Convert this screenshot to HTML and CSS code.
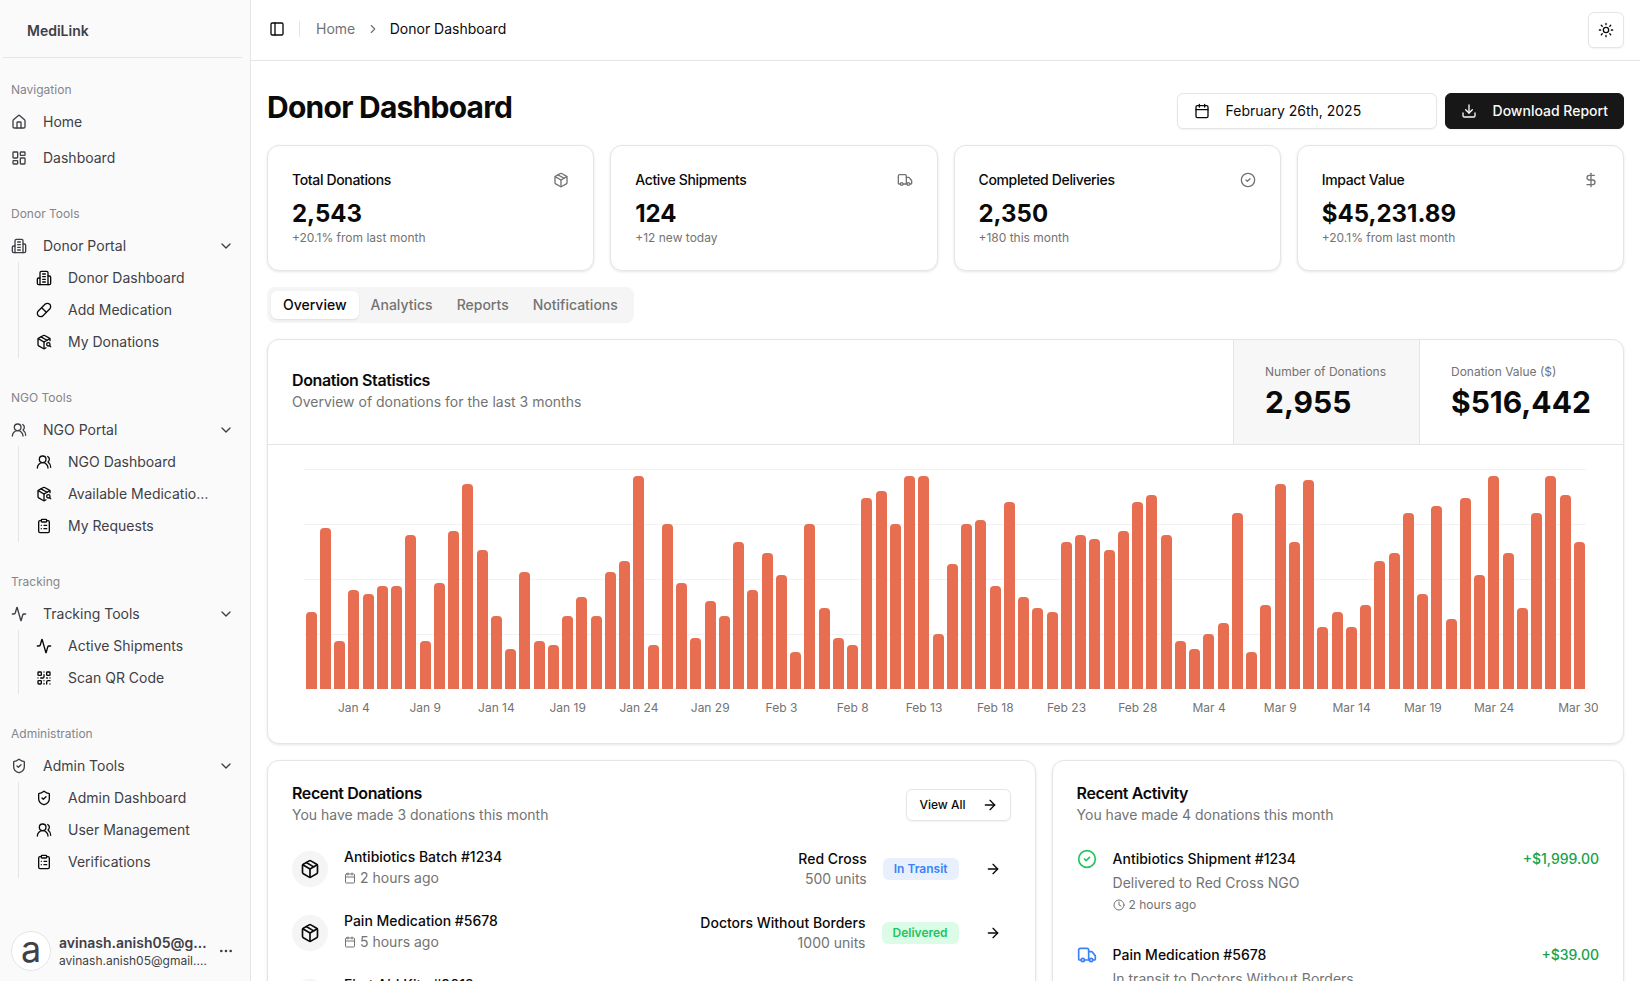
FILE: index.html
```html
<!DOCTYPE html>
<html lang="en">
<head>
    <meta charset="UTF-8">
    <title>Donor Dashboard - MediLink</title>
    <link rel="stylesheet" href="styles.css">
</head>
<body>

<!-- Icon sprite -->
<svg class="sprite" xmlns="http://www.w3.org/2000/svg">
    <symbol id="i-house" viewBox="0 0 24 24"><path d="M15 21v-8a1 1 0 0 0-1-1h-4a1 1 0 0 0-1 1v8"/><path d="M3 10a2 2 0 0 1 .709-1.528l7-5.999a2 2 0 0 1 2.582 0l7 5.999A2 2 0 0 1 21 10v9a2 2 0 0 1-2 2H5a2 2 0 0 1-2-2z"/></symbol>
    <symbol id="i-layout" viewBox="0 0 24 24"><rect width="7" height="9" x="3" y="3" rx="1"/><rect width="7" height="5" x="14" y="3" rx="1"/><rect width="7" height="9" x="14" y="12" rx="1"/><rect width="7" height="5" x="3" y="16" rx="1"/></symbol>
    <symbol id="i-building" viewBox="0 0 24 24"><path d="M6 22V4a2 2 0 0 1 2-2h8a2 2 0 0 1 2 2v18Z"/><path d="M6 12H4a2 2 0 0 0-2 2v6a2 2 0 0 0 2 2h2"/><path d="M18 9h2a2 2 0 0 1 2 2v9a2 2 0 0 1-2 2h-2"/><path d="M10 6h4M10 10h4M10 14h4M10 18h4"/></symbol>
    <symbol id="i-pill" viewBox="0 0 24 24"><path d="m10.5 20.5 10-10a4.95 4.95 0 1 0-7-7l-10 10a4.95 4.95 0 1 0 7 7Z"/><path d="m8.5 8.5 7 7"/></symbol>
    <symbol id="i-package-search" viewBox="0 0 24 24"><path d="M21 10V8a2 2 0 0 0-1-1.73l-7-4a2 2 0 0 0-2 0l-7 4A2 2 0 0 0 3 8v8a2 2 0 0 0 1 1.73l7 4a2 2 0 0 0 2 0l2-1.14"/><path d="m7.5 4.27 9 5.15"/><polyline points="3.29 7 12 12 20.71 7"/><line x1="12" x2="12" y1="22" y2="12"/><circle cx="18.5" cy="15.5" r="2.5"/><path d="M20.27 17.27 22 19"/></symbol>
    <symbol id="i-users" viewBox="0 0 24 24"><path d="M18 21a8 8 0 0 0-16 0"/><circle cx="10" cy="8" r="5"/><path d="M22 20c0-3.37-2-6.5-4-8a5 5 0 0 0-.45-8.3"/></symbol>
    <symbol id="i-clipboard" viewBox="0 0 24 24"><rect width="8" height="4" x="8" y="2" rx="1"/><path d="M16 4h2a2 2 0 0 1 2 2v14a2 2 0 0 1-2 2H6a2 2 0 0 1-2-2V6a2 2 0 0 1 2-2h2"/><path d="M12 11h4M12 16h4M8 11h.01M8 16h.01"/></symbol>
    <symbol id="i-activity" viewBox="0 0 24 24"><path d="M22 12h-2.48a2 2 0 0 0-1.93 1.46l-2.35 8.36a.25.25 0 0 1-.48 0L9.24 2.18a.25.25 0 0 0-.48 0l-2.35 8.36A2 2 0 0 1 4.49 12H2"/></symbol>
    <symbol id="i-qr" viewBox="0 0 24 24"><rect width="5" height="5" x="3" y="3" rx="1"/><rect width="5" height="5" x="16" y="3" rx="1"/><rect width="5" height="5" x="3" y="16" rx="1"/><path d="M21 16h-3a2 2 0 0 0-2 2v3"/><path d="M21 21v.01"/><path d="M12 7v3a2 2 0 0 1-2 2H7"/><path d="M3 12h.01M12 3h.01M12 16v.01M16 12h1M21 12v.01M12 21v-1"/></symbol>
    <symbol id="i-shield" viewBox="0 0 24 24"><path d="M20 13c0 5-3.5 7.5-7.66 8.95a1 1 0 0 1-.67-.01C7.5 20.5 4 18 4 13V6a1 1 0 0 1 1-1c2 0 4.5-1.2 6.24-2.72a1.17 1.17 0 0 1 1.52 0C14.51 3.81 17 5 19 5a1 1 0 0 1 1 1z"/><path d="m9 12 2 2 4-4"/></symbol>
    <symbol id="i-chevron-down" viewBox="0 0 24 24"><path d="m6 9 6 6 6-6"/></symbol>
    <symbol id="i-chevron-right" viewBox="0 0 24 24"><path d="m9 18 6-6-6-6"/></symbol>
    <symbol id="i-panel" viewBox="0 0 24 24"><rect width="18" height="18" x="3" y="3" rx="2"/><path d="M9 3v18"/></symbol>
    <symbol id="i-sun" viewBox="0 0 24 24"><circle cx="12" cy="12" r="4"/><path d="M12 2v2M12 20v2M4.93 4.93l1.41 1.41M17.66 17.66l1.41 1.41M2 12h2M20 12h2M6.34 17.66l-1.41 1.41M19.07 4.93l-1.41 1.41"/></symbol>
    <symbol id="i-calendar" viewBox="0 0 24 24"><path d="M8 2v4M16 2v4"/><rect width="18" height="18" x="3" y="4" rx="2"/><path d="M3 10h18"/></symbol>
    <symbol id="i-download" viewBox="0 0 24 24"><path d="M21 15v4a2 2 0 0 1-2 2H5a2 2 0 0 1-2-2v-4"/><polyline points="7 10 12 15 17 10"/><line x1="12" x2="12" y1="15" y2="3"/></symbol>
    <symbol id="i-package" viewBox="0 0 24 24"><path d="m7.5 4.27 9 5.15"/><path d="M21 8a2 2 0 0 0-1-1.73l-7-4a2 2 0 0 0-2 0l-7 4A2 2 0 0 0 3 8v8a2 2 0 0 0 1 1.73l7 4a2 2 0 0 0 2 0l7-4A2 2 0 0 0 21 16Z"/><path d="m3.3 7 8.7 5 8.7-5"/><path d="M12 22V12"/></symbol>
    <symbol id="i-truck" viewBox="0 0 24 24"><path d="M14 18V6a2 2 0 0 0-2-2H4a2 2 0 0 0-2 2v11a1 1 0 0 0 1 1h2"/><path d="M15 18H9"/><path d="M19 18h2a1 1 0 0 0 1-1v-3.65a1 1 0 0 0-.22-.624l-3.48-4.35A1 1 0 0 0 17.52 8H14"/><circle cx="17" cy="18" r="2"/><circle cx="7" cy="18" r="2"/></symbol>
    <symbol id="i-check" viewBox="0 0 24 24"><circle cx="12" cy="12" r="10"/><path d="m9 12 2 2 4-4"/></symbol>
    <symbol id="i-dollar" viewBox="0 0 24 24"><line x1="12" x2="12" y1="2" y2="22"/><path d="M17 5H9.5a3.5 3.5 0 0 0 0 7h5a3.5 3.5 0 0 1 0 7H6"/></symbol>
    <symbol id="i-arrow" viewBox="0 0 24 24"><path d="M5 12h14"/><path d="m12 5 7 7-7 7"/></symbol>
    <symbol id="i-clock" viewBox="0 0 24 24"><circle cx="12" cy="12" r="10"/><polyline points="12 6 12 12 16 14"/></symbol>
    <symbol id="i-dots" viewBox="0 0 24 24"><circle cx="12" cy="12" r="1"/><circle cx="19" cy="12" r="1"/><circle cx="5" cy="12" r="1"/></symbol>
</svg>

<div class="app">
    <!-- Sidebar -->
    <aside class="sidebar">
        <div class="brand">MediLink</div>
        <nav class="side-nav">
            <div class="side-group">
                <div class="side-label">Navigation</div>
                <a class="side-item"><svg class="icon"><use href="#i-house"/></svg><span>Home</span></a>
                <a class="side-item side-item-next"><svg class="icon"><use href="#i-layout"/></svg><span>Dashboard</span></a>
            </div>

            <div class="side-group">
                <div class="side-label">Donor Tools</div>
                <a class="side-item"><svg class="icon"><use href="#i-building"/></svg><span>Donor Portal</span><svg class="icon chevron"><use href="#i-chevron-down"/></svg></a>
                <div class="side-sub">
                    <a class="side-item"><svg class="icon"><use href="#i-building"/></svg><span>Donor Dashboard</span></a>
                    <a class="side-item"><svg class="icon"><use href="#i-pill"/></svg><span>Add Medication</span></a>
                    <a class="side-item"><svg class="icon"><use href="#i-package-search"/></svg><span>My Donations</span></a>
                </div>
            </div>

            <div class="side-group">
                <div class="side-label">NGO Tools</div>
                <a class="side-item"><svg class="icon"><use href="#i-users"/></svg><span>NGO Portal</span><svg class="icon chevron"><use href="#i-chevron-down"/></svg></a>
                <div class="side-sub">
                    <a class="side-item"><svg class="icon"><use href="#i-users"/></svg><span>NGO Dashboard</span></a>
                    <a class="side-item"><svg class="icon"><use href="#i-package-search"/></svg><span>Available Medications</span></a>
                    <a class="side-item"><svg class="icon"><use href="#i-clipboard"/></svg><span>My Requests</span></a>
                </div>
            </div>

            <div class="side-group">
                <div class="side-label">Tracking</div>
                <a class="side-item"><svg class="icon"><use href="#i-activity"/></svg><span>Tracking Tools</span><svg class="icon chevron"><use href="#i-chevron-down"/></svg></a>
                <div class="side-sub">
                    <a class="side-item"><svg class="icon"><use href="#i-activity"/></svg><span>Active Shipments</span></a>
                    <a class="side-item"><svg class="icon"><use href="#i-qr"/></svg><span>Scan QR Code</span></a>
                </div>
            </div>

            <div class="side-group">
                <div class="side-label">Administration</div>
                <a class="side-item"><svg class="icon"><use href="#i-shield"/></svg><span>Admin Tools</span><svg class="icon chevron"><use href="#i-chevron-down"/></svg></a>
                <div class="side-sub">
                    <a class="side-item"><svg class="icon"><use href="#i-shield"/></svg><span>Admin Dashboard</span></a>
                    <a class="side-item"><svg class="icon"><use href="#i-users"/></svg><span>User Management</span></a>
                    <a class="side-item"><svg class="icon"><use href="#i-clipboard"/></svg><span>Verifications</span></a>
                </div>
            </div>
        </nav>

        <div class="side-user">
            <div class="avatar">a</div>
            <div class="user-text">
                <div class="user-name">avinash.anish05@gmail.com</div>
                <div class="user-mail">avinash.anish05@gmail.com</div>
            </div>
            <svg class="icon"><use href="#i-dots"/></svg>
        </div>
    </aside>

    <div class="main">
        <!-- Top bar -->
        <header class="topbar">
            <svg class="icon"><use href="#i-panel"/></svg>
            <span class="topbar-sep"></span>
            <span class="crumb">Home</span>
            <svg class="icon crumb-chevron"><use href="#i-chevron-right"/></svg>
            <span class="crumb crumb-current">Donor Dashboard</span>
            <button class="theme-btn"><svg class="icon"><use href="#i-sun"/></svg></button>
        </header>

        <main class="content">
            <div class="page-head">
                <h1>Donor Dashboard</h1>
                <div class="page-actions">
                    <button class="btn date-btn"><svg class="icon"><use href="#i-calendar"/></svg><span>February 26th, 2025</span></button>
                    <button class="btn download-btn"><svg class="icon"><use href="#i-download"/></svg><span>Download Report</span></button>
                </div>
            </div>

            <!-- Stat cards -->
            <div class="stat-grid">
                <div class="card stat-card">
                    <div class="stat-top"><span>Total Donations</span><svg class="icon"><use href="#i-package"/></svg></div>
                    <div class="stat-value">2,543</div>
                    <div class="stat-note">+20.1% from last month</div>
                </div>
                <div class="card stat-card">
                    <div class="stat-top"><span>Active Shipments</span><svg class="icon"><use href="#i-truck"/></svg></div>
                    <div class="stat-value">124</div>
                    <div class="stat-note">+12 new today</div>
                </div>
                <div class="card stat-card">
                    <div class="stat-top"><span>Completed Deliveries</span><svg class="icon"><use href="#i-check"/></svg></div>
                    <div class="stat-value">2,350</div>
                    <div class="stat-note">+180 this month</div>
                </div>
                <div class="card stat-card">
                    <div class="stat-top"><span>Impact Value</span><svg class="icon"><use href="#i-dollar"/></svg></div>
                    <div class="stat-value">$45,231.89</div>
                    <div class="stat-note">+20.1% from last month</div>
                </div>
            </div>

            <div class="tabs">
                <span class="tab tab-active">Overview</span>
                <span class="tab">Analytics</span>
                <span class="tab">Reports</span>
                <span class="tab">Notifications</span>
            </div>

            <!-- Chart -->
            <section class="card chart-card">
                <div class="chart-head">
                    <div class="chart-title">
                        <h3>Donation Statistics</h3>
                        <p>Overview of donations for the last 3 months</p>
                    </div>
                    <div class="chart-total chart-total-active">
                        <span>Number of Donations</span>
                        <strong>2,955</strong>
                    </div>
                    <div class="chart-total chart-total-value">
                        <span>Donation Value ($)</span>
                        <strong>$516,442</strong>
                    </div>
                </div>
                <div class="chart-body">
                    <div class="plot">
                        <div class="bar" style="height:77px"></div><div class="bar" style="height:161.3px"></div><div class="bar" style="height:47.7px"></div><div class="bar" style="height:99px"></div><div class="bar" style="height:95.3px"></div>
                        <div class="bar" style="height:102.7px"></div><div class="bar" style="height:102.7px"></div><div class="bar" style="height:154px"></div><div class="bar" style="height:47.7px"></div><div class="bar" style="height:106.3px"></div>
                        <div class="bar" style="height:157.7px"></div><div class="bar" style="height:205.3px"></div><div class="bar" style="height:139.3px"></div><div class="bar" style="height:73.3px"></div><div class="bar" style="height:40.3px"></div>
                        <div class="bar" style="height:117.3px"></div><div class="bar" style="height:47.7px"></div><div class="bar" style="height:44px"></div><div class="bar" style="height:73.3px"></div><div class="bar" style="height:91.7px"></div>
                        <div class="bar" style="height:73.3px"></div><div class="bar" style="height:117.3px"></div><div class="bar" style="height:128.3px"></div><div class="bar" style="height:212.7px"></div><div class="bar" style="height:44px"></div>
                        <div class="bar" style="height:165px"></div><div class="bar" style="height:106.3px"></div><div class="bar" style="height:51.3px"></div><div class="bar" style="height:88px"></div><div class="bar" style="height:73.3px"></div>
                        <div class="bar" style="height:146.7px"></div><div class="bar" style="height:99px"></div><div class="bar" style="height:135.7px"></div><div class="bar" style="height:113.7px"></div><div class="bar" style="height:36.7px"></div>
                        <div class="bar" style="height:165px"></div><div class="bar" style="height:80.7px"></div><div class="bar" style="height:51.3px"></div><div class="bar" style="height:44px"></div><div class="bar" style="height:190.7px"></div>
                        <div class="bar" style="height:198px"></div><div class="bar" style="height:165px"></div><div class="bar" style="height:212.7px"></div><div class="bar" style="height:212.7px"></div><div class="bar" style="height:55px"></div>
                        <div class="bar" style="height:124.7px"></div><div class="bar" style="height:165px"></div><div class="bar" style="height:168.7px"></div><div class="bar" style="height:102.7px"></div><div class="bar" style="height:187px"></div>
                        <div class="bar" style="height:91.7px"></div><div class="bar" style="height:80.7px"></div><div class="bar" style="height:77px"></div><div class="bar" style="height:146.7px"></div><div class="bar" style="height:154px"></div>
                        <div class="bar" style="height:150.3px"></div><div class="bar" style="height:139.3px"></div><div class="bar" style="height:157.7px"></div><div class="bar" style="height:187px"></div><div class="bar" style="height:194.3px"></div>
                        <div class="bar" style="height:154px"></div><div class="bar" style="height:47.7px"></div><div class="bar" style="height:40.3px"></div><div class="bar" style="height:55px"></div><div class="bar" style="height:66px"></div>
                        <div class="bar" style="height:176px"></div><div class="bar" style="height:36.7px"></div><div class="bar" style="height:84.3px"></div><div class="bar" style="height:205.3px"></div><div class="bar" style="height:146.7px"></div>
                        <div class="bar" style="height:209px"></div><div class="bar" style="height:62.3px"></div><div class="bar" style="height:77px"></div><div class="bar" style="height:62.3px"></div><div class="bar" style="height:84.3px"></div>
                        <div class="bar" style="height:128.3px"></div><div class="bar" style="height:135.7px"></div><div class="bar" style="height:176px"></div><div class="bar" style="height:95.3px"></div><div class="bar" style="height:183.3px"></div>
                        <div class="bar" style="height:69.7px"></div><div class="bar" style="height:190.7px"></div><div class="bar" style="height:113.7px"></div><div class="bar" style="height:212.7px"></div><div class="bar" style="height:135.7px"></div>
                        <div class="bar" style="height:80.7px"></div><div class="bar" style="height:176px"></div><div class="bar" style="height:212.7px"></div><div class="bar" style="height:194.3px"></div><div class="bar" style="height:146.7px"></div>
                    </div>
                    <div class="ticks">
                        <span>Jan 4</span><span>Jan 9</span><span>Jan 14</span><span>Jan 19</span><span>Jan 24</span><span>Jan 29</span>
                        <span>Feb 3</span><span>Feb 8</span><span>Feb 13</span><span>Feb 18</span><span>Feb 23</span><span>Feb 28</span>
                        <span>Mar 4</span><span>Mar 9</span><span>Mar 14</span><span>Mar 19</span><span>Mar 24</span><span class="tick-last">Mar 30</span>
                    </div>
                </div>
            </section>

            <!-- Recent lists -->
            <div class="recent-grid">
                <section class="card recent-card donations-card">
                    <div class="recent-head">
                        <div>
                            <h3>Recent Donations</h3>
                            <p>You have made 3 donations this month</p>
                        </div>
                        <button class="btn view-btn"><span>View All</span><svg class="icon"><use href="#i-arrow"/></svg></button>
                    </div>
                    <div class="donation-row">
                        <div class="round-icon"><svg class="icon icon-lg"><use href="#i-package"/></svg></div>
                        <div class="donation-info">
                            <div class="row-name">Antibiotics Batch #1234</div>
                            <div class="row-time"><svg class="icon icon-sm"><use href="#i-calendar"/></svg>2 hours ago</div>
                        </div>
                        <div class="donation-to">
                            <div class="row-name">Red Cross</div>
                            <div class="row-units">500 units</div>
                        </div>
                        <span class="badge badge-blue">In Transit</span>
                        <span class="row-arrow"><svg class="icon"><use href="#i-arrow"/></svg></span>
                    </div>
                    <div class="donation-row">
                        <div class="round-icon"><svg class="icon icon-lg"><use href="#i-package"/></svg></div>
                        <div class="donation-info">
                            <div class="row-name">Pain Medication #5678</div>
                            <div class="row-time"><svg class="icon icon-sm"><use href="#i-calendar"/></svg>5 hours ago</div>
                        </div>
                        <div class="donation-to">
                            <div class="row-name">Doctors Without Borders</div>
                            <div class="row-units">1000 units</div>
                        </div>
                        <span class="badge badge-green">Delivered</span>
                        <span class="row-arrow"><svg class="icon"><use href="#i-arrow"/></svg></span>
                    </div>
                    <div class="donation-row">
                        <div class="round-icon"><svg class="icon icon-lg"><use href="#i-package"/></svg></div>
                        <div class="donation-info">
                            <div class="row-name">First Aid Kits #9012</div>
                            <div class="row-time"><svg class="icon icon-sm"><use href="#i-calendar"/></svg>1 day ago</div>
                        </div>
                    </div>
                </section>

                <section class="card recent-card">
                    <div class="recent-head">
                        <div>
                            <h3>Recent Activity</h3>
                            <p>You have made 4 donations this month</p>
                        </div>
                    </div>
                    <div class="activity-row">
                        <svg class="icon icon-lg icon-green"><use href="#i-check"/></svg>
                        <div class="activity-text">
                            <div class="row-name">Antibiotics Shipment #1234</div>
                            <div class="row-sub">Delivered to Red Cross NGO</div>
                            <div class="row-when"><svg class="icon icon-sm"><use href="#i-clock"/></svg>2 hours ago</div>
                        </div>
                        <div class="amount">+$1,999.00</div>
                    </div>
                    <div class="activity-row">
                        <svg class="icon icon-lg icon-blue"><use href="#i-truck"/></svg>
                        <div class="activity-text">
                            <div class="row-name">Pain Medication #5678</div>
                            <div class="row-sub">In transit to Doctors Without Borders</div>
                        </div>
                        <div class="amount">+$39.00</div>
                    </div>
                </section>
            </div>
        </main>
    </div>
</div>

</body>
</html>
```

FILE: styles.css
```css
* { box-sizing: border-box; }
html, body { height: 100%; }
body { margin: 0; overflow: hidden; background: #fff; color: #0a0a0a; font-family: Inter, "Liberation Sans", sans-serif; font-size: 14px; line-height: 20px; }
h1, h3, p { margin: 0; }
button { font-family: inherit; cursor: pointer; }

.sprite { width: 0; height: 0; display: block; }
.icon { width: 16px; height: 16px; flex: none; fill: none; stroke: currentColor; stroke-width: 2; stroke-linecap: round; stroke-linejoin: round; }
.icon-sm { width: 12px; height: 12px; }
.icon-lg { width: 20px; height: 20px; }
.icon-green { color: #22c55e; }
.icon-blue { color: #3b82f6; }

.app { display: flex; height: 981px; padding-right: 3px; overflow: hidden; }

/* Sidebar */
.sidebar { width: 251px; flex: none; display: flex; flex-direction: column; background: #fafafa; border-right: 1px solid #e5e5e5; color: #3f3f46; }
.brand { height: 58px; margin: 0 8px 0 3px; padding: 5px 0 0 24px; display: flex; align-items: center; border-bottom: 1px solid #e5e5e5; font-weight: 600; }
.side-nav { padding: 16px 8px 0 3px; }
.side-group { margin-bottom: 24px; }
.side-label { height: 32px; padding: 0 8px; display: flex; align-items: center; font-size: 12px; color: #85858b; }
.side-item { height: 32px; padding: 0 8px; display: flex; align-items: center; gap: 16px; }
.side-item span { flex: 1; min-width: 0; overflow: hidden; text-overflow: ellipsis; white-space: nowrap; }
.side-item-next { margin-top: 4px; }
.side-sub { margin: 0 25px 0 15px; padding-left: 9px; border-left: 1px solid #e5e5e5; }
.side-sub .icon { color: #0a0a0a; }
.chevron { color: #3f3f46; }

.side-user { margin-top: auto; padding: 0 16px 10px 11px; display: flex; align-items: center; gap: 8px; }
.avatar { width: 40px; height: 40px; flex: none; display: flex; align-items: center; justify-content: center; border: 1px solid #e5e5e5; border-radius: 50%; background: #fff; font-size: 36px; line-height: 34px; padding-bottom: 4px; }
.user-text { flex: 1; min-width: 0; }
.user-name, .user-mail { overflow: hidden; text-overflow: ellipsis; white-space: nowrap; }
.user-name { font-weight: 600; }
.user-mail { font-size: 12px; line-height: 16px; }

/* Top bar */
.main { flex: 1; min-width: 0; display: flex; flex-direction: column; }
.topbar { height: 61px; flex: none; padding: 0 16px 3px 18px; display: flex; align-items: center; border-bottom: 1px solid #e5e5e5; }
.topbar-sep { width: 1px; height: 16px; margin: 0 16px 0 14px; background: #e5e5e5; }
.crumb { color: #737373; }
.crumb-chevron { width: 14px; height: 14px; margin: 0 10px 0 10.5px; color: #737373; }
.crumb-current { color: #0a0a0a; }
.theme-btn { width: 36px; height: 36px; margin-left: auto; margin-top: 3px; display: flex; align-items: center; justify-content: center; background: #fff; border: 1px solid #e5e5e5; border-radius: 6px; box-shadow: 0 1px 2px rgba(0, 0, 0, 0.05); color: #0a0a0a; padding: 0; }

/* Content */
.content { padding: 28px 16px 0; }
.page-head { height: 40px; display: flex; justify-content: space-between; margin-bottom: 16px; }
h1 { font-size: 30px; line-height: 36px; font-weight: 700; letter-spacing: -0.025em; }
.page-actions { align-self: flex-end; display: flex; gap: 8px; }
.btn { display: flex; align-items: center; font-size: 14px; font-weight: 500; border-radius: 6px; border: 1px solid #e5e5e5; background: #fff; color: #0a0a0a; box-shadow: 0 1px 2px rgba(0, 0, 0, 0.05); }
.page-actions .btn span { margin-top: -2px; }
.date-btn { width: 260px; height: 36px; padding: 0 16px; gap: 16px; font-weight: 400; }
.download-btn { height: 36px; padding: 0 15px; gap: 16px; background: #171717; border-color: #171717; color: #fafafa; }

.card { background: #fff; border: 1px solid #e5e5e5; border-radius: 12px; box-shadow: 0 1px 3px rgba(0, 0, 0, 0.1); }

.stat-grid { display: grid; grid-template-columns: repeat(4, 1fr); gap: 16px; }
.stat-card { height: 126px; padding: 24px; }
.stat-top { display: flex; justify-content: space-between; align-items: center; font-weight: 500; letter-spacing: -0.025em; }
.stat-top .icon { color: #737373; }
.stat-value { margin-top: 8px; font-size: 24px; line-height: 32px; font-weight: 700; }
.stat-note { font-size: 12px; line-height: 16px; color: #737373; }

.tabs { display: inline-flex; height: 36px; margin: 16px 0; padding: 4px; background: #f5f5f5; border-radius: 8px; color: #737373; font-weight: 500; vertical-align: top; }
.tab { height: 28px; padding: 0 12px; display: flex; align-items: center; border-radius: 6px; }
.tab-active { background: #fff; color: #0a0a0a; box-shadow: 0 1px 2px rgba(0, 0, 0, 0.1); }

/* Chart */
.chart-card { height: 405px; overflow: hidden; }
.chart-head { display: flex; border-bottom: 1px solid #e5e5e5; }
.chart-title { flex: 1; padding: 0 24px; display: flex; flex-direction: column; justify-content: center; }
.chart-title h3, .recent-head h3 { font-size: 16px; line-height: 16px; font-weight: 600; letter-spacing: -0.025em; }
.chart-title p, .recent-head p { margin-top: 4px; color: #737373; }
.chart-total { width: 186px; padding: 24px 0 24px 31px; border-left: 1px solid #e5e5e5; display: flex; flex-direction: column; gap: 4px; }
.chart-total-value { width: 204px; }
.chart-total-active { background: #f7f7f7; }
.chart-total span { font-size: 12px; line-height: 16px; color: #737373; }
.chart-total strong { font-size: 30px; line-height: 36px; font-weight: 700; }
.chart-body { padding: 24px 37px 0 36px; }
.plot { height: 220px; display: flex; align-items: flex-end; background-image: linear-gradient(#f2f2f2 1px, transparent 1px); background-size: 100% 55px; }
.bar { flex: 1; margin: 0 1.6px; background: #e76e50; border-radius: 4px 4px 0 0; }
.ticks { margin-top: 11px; padding-left: 14.24px; display: flex; font-size: 12px; line-height: 16px; color: #737373; }
.ticks span { flex: 0 0 71.28px; text-align: center; white-space: nowrap; }
.ticks .tick-last { margin-left: 13px; }

/* Recent lists */
.recent-grid { margin-top: 16px; display: grid; grid-template-columns: repeat(7, 1fr); gap: 16px; }
.recent-card { grid-column: span 3; height: 400px; padding: 24px; }
.donations-card { grid-column: span 4; }
.recent-head { display: flex; justify-content: space-between; align-items: center; margin-bottom: 24px; }
.view-btn { height: 32px; padding: 0 12px; gap: 16px; font-size: 12px; border-radius: 6px; }
.view-btn span { margin-top: -2px; }

.donation-row { height: 44px; margin-bottom: 20px; display: flex; align-items: center; }
.donations-card .recent-head { margin-bottom: 22px; }
.round-icon { width: 36px; height: 36px; flex: none; display: flex; align-items: center; justify-content: center; background: #f5f5f5; border-radius: 50%; }
.donation-info { flex: 1; min-width: 0; margin: 0 0 4px 16px; }
.row-name { font-weight: 500; }
.row-time { margin-top: 1px; display: flex; align-items: center; gap: 4px; color: #737373; }
.donation-to { text-align: right; }
.row-units { color: #737373; }
.badge { margin-left: 16px; height: 22px; padding: 0 11px; display: flex; align-items: center; border-radius: 6px; font-size: 12px; font-weight: 600; }
.badge-blue { background: #e8f0fe; color: #3b82f6; }
.badge-green { background: #dcfce7; color: #22c55e; }
.row-arrow { width: 36px; margin-left: 16px; display: flex; justify-content: center; }

.activity-row { margin-bottom: 32px; display: flex; gap: 16px; }
.activity-text { flex: 1; min-width: 0; }
.row-sub { margin-top: 4px; color: #737373; }
.row-when { margin-top: 4px; display: flex; align-items: center; gap: 4px; font-size: 12px; line-height: 16px; color: #737373; }
.amount { font-weight: 500; color: #16a34a; }
```
